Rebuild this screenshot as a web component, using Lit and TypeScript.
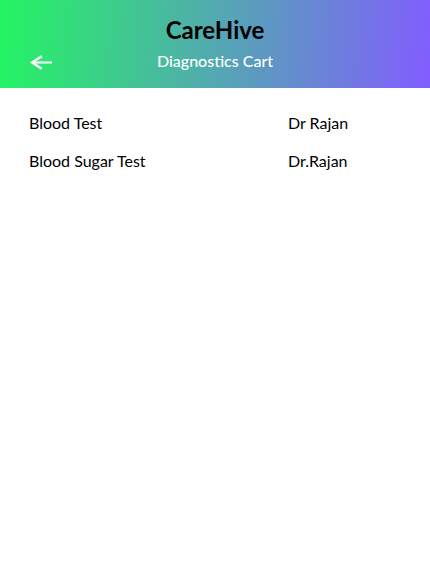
import { LitElement, html, css } from "lit";
import { customElement } from "lit/decorators.js";

interface CartItem {
  test: string;
  doctor: string;
}

@customElement("app-root")
export class AppRoot extends LitElement {
  static styles = css`
    :host {
      display: block;
      min-height: 100vh;
      background: #ffffff;
      color: #000000;
      font-family: Lato, "Liberation Sans", sans-serif;
      font-size: 16px;
      line-height: 20px;
    }
    .header {
      display: grid;
      grid-template-columns: 24px 1fr 24px;
      align-items: start;
      row-gap: 7px;
      padding: 15px 29px;
      background: linear-gradient(94deg, #24f562 0%, #825dff 100%);
    }
    .brand {
      grid-column: 1 / -1;
      margin: 0;
      font-size: 24px;
      line-height: 29px;
      font-weight: 700;
      text-align: center;
    }
    .title {
      margin: 0;
      color: #ffffff;
      font-size: 16px;
      font-weight: 500;
      text-align: center;
    }
    .back {
      display: flex;
      padding: 0;
      border: 0;
      background: none;
      color: #ffffff;
      cursor: pointer;
    }
    .cart {
      width: 100%;
      border-collapse: collapse;
      table-layout: fixed;
      margin-top: 16px;
    }
    .cart td {
      height: 38px;
      padding: 0;
    }
    .cart .test {
      width: 60%;
      padding-left: 29px;
    }
    .cart .doctor {
      padding-left: 1px;
    }
  `;

  private items: CartItem[] = [
    { test: "Blood Test", doctor: "Dr Rajan" },
    { test: "Blood Sugar Test", doctor: "Dr.Rajan" },
  ];

  render() {
    return html`
      <header class="header">
        <h1 class="brand">CareHive</h1>
        <button class="back" type="button" aria-label="Back">
          <svg width="24" height="22" viewBox="0 0 24 22" fill="none" stroke="currentColor" stroke-width="2" aria-hidden="true">
            <path d="M23 11.5H4" />
            <path d="M12.8 5.2L3 11.5L12.8 17.8" stroke-width="2.3" />
          </svg>
        </button>
        <h2 class="title">Diagnostics Cart</h2>
      </header>
      <main>
        <table class="cart" aria-label="Diagnostics Cart">
          <tbody>
            ${this.items.map(
              (item) => html`<tr>
                <td class="test">${item.test}</td>
                <td class="doctor">${item.doctor}</td>
              </tr>`
            )}
          </tbody>
        </table>
      </main>
    `;
  }
}
